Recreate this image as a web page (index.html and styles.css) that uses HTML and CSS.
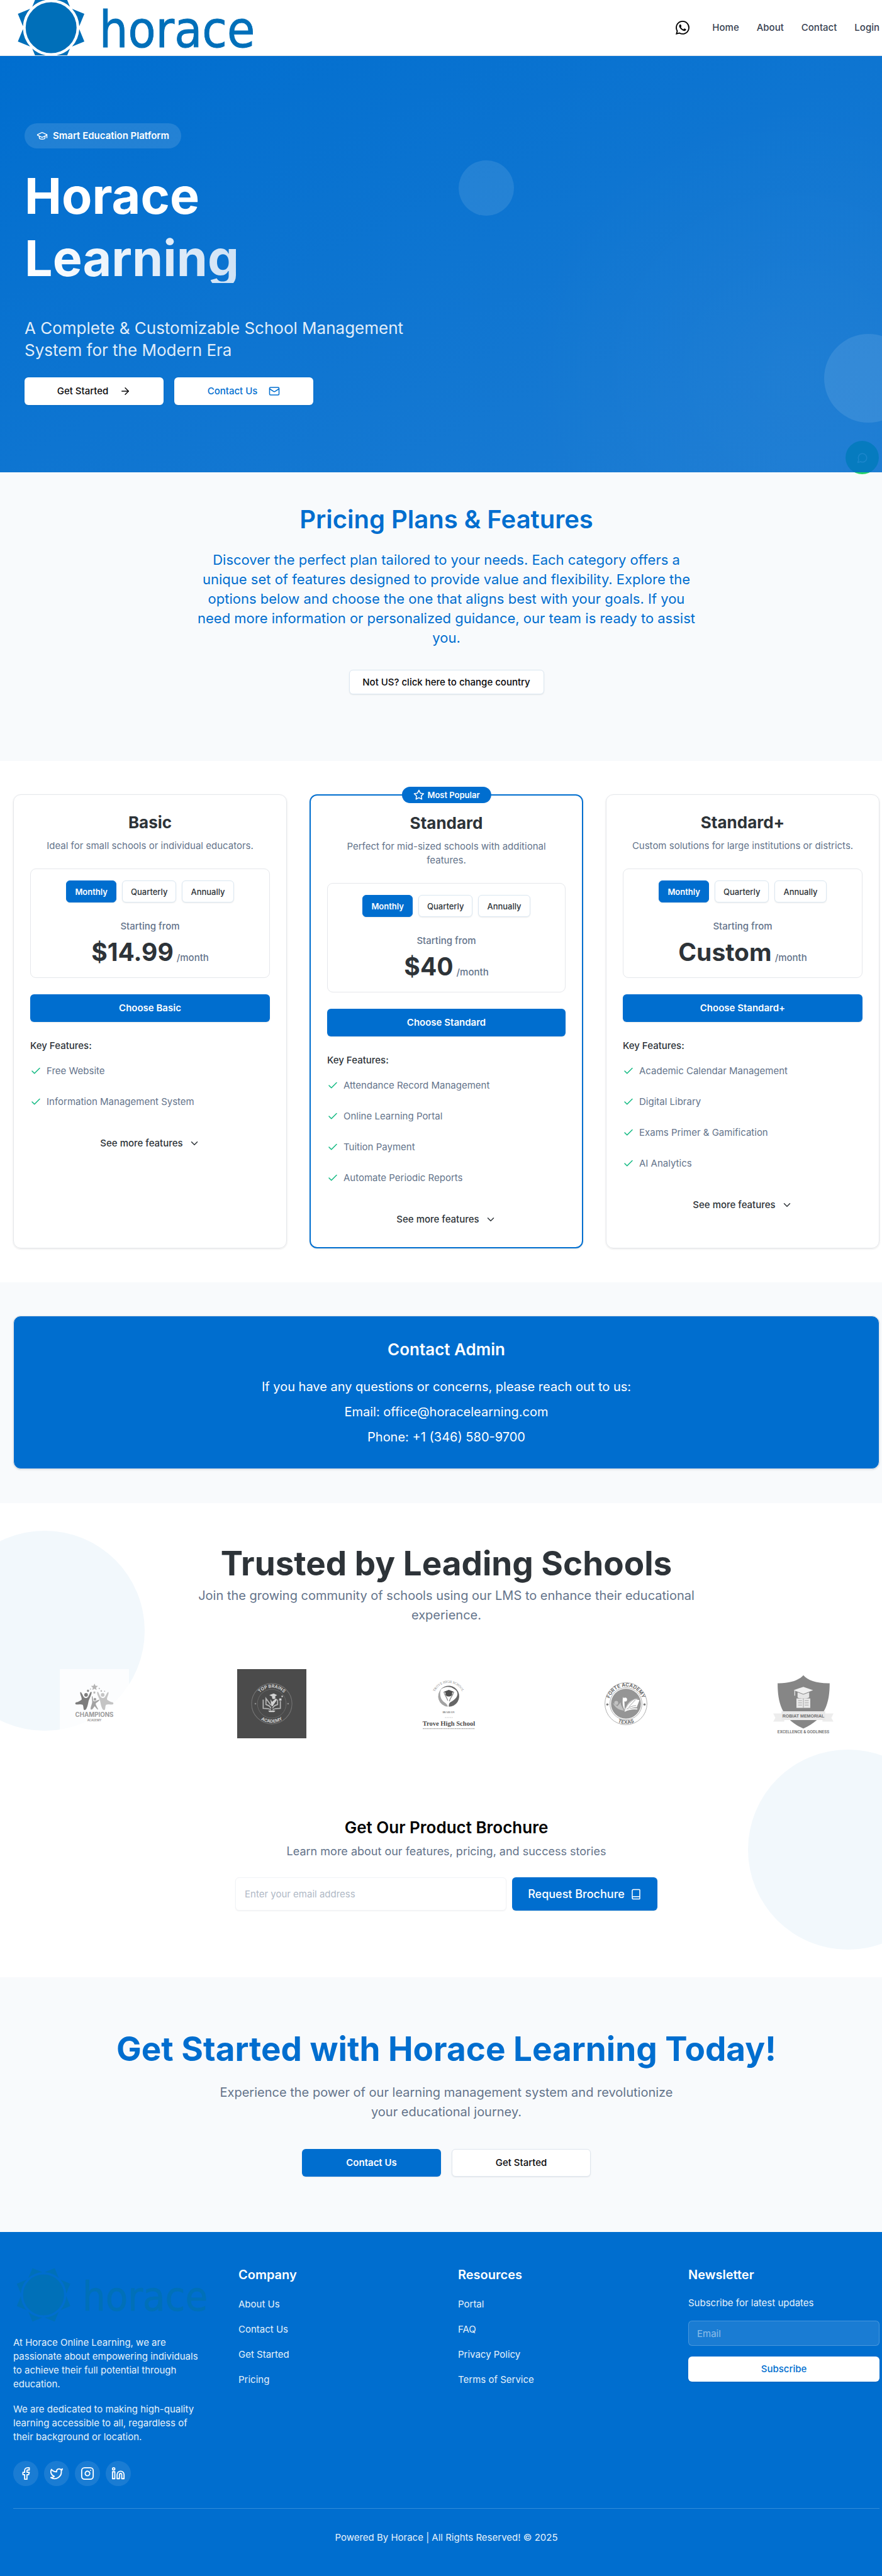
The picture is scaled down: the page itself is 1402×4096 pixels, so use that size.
FILE: index.html
```html
<!DOCTYPE html>
<html lang="en">
<head>
<meta charset="utf-8">
<meta name="viewport" content="width=device-width, initial-scale=1">
<title>Horace Learning</title>
<link rel="stylesheet" href="styles.css">
</head>
<body>

<svg class="sprite" aria-hidden="true">
  <symbol id="sun" viewBox="0 0 136 132">
    <g fill="currentColor" transform="translate(68 66)">
      <circle r="46"/>
      <path d="M65 0L48 17A51 51 0 0 0 48 -17Z" transform="rotate(22.5)"/>
      <path d="M65 0L48 17A51 51 0 0 0 48 -17Z" transform="rotate(67.5)"/>
      <path d="M65 0L48 17A51 51 0 0 0 48 -17Z" transform="rotate(112.5)"/>
      <path d="M65 0L48 17A51 51 0 0 0 48 -17Z" transform="rotate(157.5)"/>
      <path d="M65 0L48 17A51 51 0 0 0 48 -17Z" transform="rotate(202.5)"/>
      <path d="M65 0L48 17A51 51 0 0 0 48 -17Z" transform="rotate(247.5)"/>
      <path d="M65 0L48 17A51 51 0 0 0 48 -17Z" transform="rotate(292.5)"/>
      <path d="M65 0L48 17A51 51 0 0 0 48 -17Z" transform="rotate(337.5)"/>
    </g>
  </symbol>
  <symbol id="i-check" viewBox="0 0 24 24"><path d="M20 6 9 17l-5-5"/></symbol>
  <symbol id="i-chevron" viewBox="0 0 24 24"><path d="m6 9 6 6 6-6"/></symbol>
  <symbol id="i-star" viewBox="0 0 24 24"><path d="m12 2 3.09 6.26L22 9.27l-5 4.87 1.18 6.88L12 17.77l-6.18 3.25L7 14.14 2 9.27l6.91-1.01z"/></symbol>
</svg>

<header class="site-header">
  <div class="container header-row">
    <a class="brand-link" href="#" aria-label="Horace home"><svg class="brand brand-header" viewBox="0 16 440 100"><svg class="brand-crop" y="16" width="136" height="100" viewBox="0 16 136 100"><use href="#sun" width="136" height="132"/></svg><text class="brand-word" x="155" y="101">horace</text></svg></a>
    <nav class="nav">
      <a class="nav-wa" href="#" aria-label="WhatsApp">
        <svg width="22" height="22" viewBox="0 0 24 24" fill="currentColor"><path d="M17.472 14.382c-.297-.149-1.758-.867-2.03-.967-.273-.099-.471-.148-.67.15-.197.297-.767.966-.94 1.164-.173.199-.347.223-.644.075-.297-.15-1.255-.463-2.39-1.475-.883-.788-1.48-1.761-1.653-2.059-.173-.297-.018-.458.13-.606.134-.133.298-.347.446-.52.149-.174.198-.298.298-.497.099-.198.05-.371-.025-.52-.075-.149-.669-1.612-.916-2.207-.242-.579-.487-.5-.669-.51-.173-.008-.371-.01-.57-.01-.198 0-.52.074-.792.372-.272.297-1.04 1.016-1.04 2.479 0 1.462 1.065 2.875 1.213 3.074.149.198 2.096 3.2 5.077 4.487.709.306 1.262.489 1.694.625.712.227 1.36.195 1.871.118.571-.085 1.758-.719 2.006-1.413.248-.694.248-1.289.173-1.413-.074-.124-.272-.198-.57-.347m-5.421 7.403h-.004a9.87 9.87 0 0 1-5.031-1.378l-.361-.214-3.741.982.998-3.648-.235-.374a9.86 9.86 0 0 1-1.51-5.26c.001-5.45 4.436-9.884 9.888-9.884 2.64 0 5.122 1.03 6.988 2.898a9.825 9.825 0 0 1 2.893 6.994c-.003 5.45-4.437 9.884-9.885 9.884m8.413-18.297A11.815 11.815 0 0 0 12.05 0C5.495 0 .16 5.335.157 11.892c0 2.096.547 4.142 1.588 5.945L.057 24l6.305-1.654a11.882 11.882 0 0 0 5.683 1.448h.005c6.554 0 11.89-5.335 11.893-11.893a11.821 11.821 0 0 0-3.48-8.413Z"/></svg>
      </a>
      <a href="#">Home</a>
      <a href="#">About</a>
      <a href="#">Contact</a>
      <a href="#">Login</a>
    </nav>
  </div>
</header>

<main>
<section class="hero">
  <div class="hero-decor" aria-hidden="true"><span class="orb orb-small"></span><span class="orb orb-large"></span></div>
  <div class="hero-body">
    <p class="hero-tag">
      <svg class="icon" viewBox="0 0 24 24"><path d="M21.42 10.922a1 1 0 0 0-.019-1.838L12.83 5.18a2 2 0 0 0-1.66 0L2.6 9.08a1 1 0 0 0 0 1.832l8.57 3.908a2 2 0 0 0 1.66 0z"/><path d="M22 10v6"/><path d="M6 12.5V16a6 3 0 0 0 12 0v-3.5"/></svg>
      Smart Education Platform
    </p>
    <h1 class="hero-title"><span>Horace</span><span class="fade">Learning</span></h1>
    <p class="hero-sub">A Complete &amp; Customizable School Management System for the Modern Era</p>
    <div class="btn-row">
      <button class="btn btn-wide btn-white">Get Started
        <svg class="icon" viewBox="0 0 24 24"><path d="M5 12h14"/><path d="m12 5 7 7-7 7"/></svg></button>
      <button class="btn btn-wide btn-white btn-brand-text">Contact Us
        <svg class="icon" viewBox="0 0 24 24"><rect x="2" y="4" width="20" height="16" rx="2"/><path d="m22 7-8.97 5.7a1.94 1.94 0 0 1-2.06 0L2 7"/></svg></button>
    </div>
  </div>
  <button class="chat" aria-label="Chat"><svg class="icon" viewBox="0 0 24 24"><path d="M7.9 20A9 9 0 1 0 4 16.1L2 22Z"/></svg></button>
</section>

<section class="intro">
  <div class="container">
    <h2>Pricing Plans &amp; Features</h2>
    <p>Discover the perfect plan tailored to your needs. Each category offers a unique set of features designed to provide value and flexibility. Explore the options below and choose the one that aligns best with your goals. If you need more information or personalized guidance, our team is ready to assist you.</p>
    <button class="btn btn-country">Not US? click here to change country</button>
  </div>
</section>

<section class="plans">
  <div class="container plan-grid">
    <article class="plan">
      <h3>Basic</h3>
      <p class="plan-desc">Ideal for small schools or individual educators.</p>
      <div class="price-box">
        <div class="periods"><button class="period on">Monthly</button><button class="period">Quarterly</button><button class="period">Annually</button></div>
        <p class="from">Starting from</p>
        <p class="price"><strong>$14.99</strong><span>/month</span></p>
      </div>
      <button class="btn btn-primary">Choose Basic</button>
      <h4>Key Features:</h4>
      <ul>
        <li><svg class="icon"><use href="#i-check"/></svg>Free Website</li>
        <li><svg class="icon"><use href="#i-check"/></svg>Information Management System</li>
      </ul>
      <button class="more">See more features <svg class="icon"><use href="#i-chevron"/></svg></button>
    </article>

    <article class="plan plan-popular">
      <p class="popular"><svg class="icon"><use href="#i-star"/></svg>Most Popular</p>
      <h3>Standard</h3>
      <p class="plan-desc">Perfect for mid-sized schools with additional features.</p>
      <div class="price-box">
        <div class="periods"><button class="period on">Monthly</button><button class="period">Quarterly</button><button class="period">Annually</button></div>
        <p class="from">Starting from</p>
        <p class="price"><strong>$40</strong><span>/month</span></p>
      </div>
      <button class="btn btn-primary">Choose Standard</button>
      <h4>Key Features:</h4>
      <ul>
        <li><svg class="icon"><use href="#i-check"/></svg>Attendance Record Management</li>
        <li><svg class="icon"><use href="#i-check"/></svg>Online Learning Portal</li>
        <li><svg class="icon"><use href="#i-check"/></svg>Tuition Payment</li>
        <li><svg class="icon"><use href="#i-check"/></svg>Automate Periodic Reports</li>
      </ul>
      <button class="more">See more features <svg class="icon"><use href="#i-chevron"/></svg></button>
    </article>

    <article class="plan">
      <h3>Standard+</h3>
      <p class="plan-desc">Custom solutions for large institutions or districts.</p>
      <div class="price-box">
        <div class="periods"><button class="period on">Monthly</button><button class="period">Quarterly</button><button class="period">Annually</button></div>
        <p class="from">Starting from</p>
        <p class="price"><strong>Custom</strong><span>/month</span></p>
      </div>
      <button class="btn btn-primary">Choose Standard+</button>
      <h4>Key Features:</h4>
      <ul>
        <li><svg class="icon"><use href="#i-check"/></svg>Academic Calendar Management</li>
        <li><svg class="icon"><use href="#i-check"/></svg>Digital Library</li>
        <li><svg class="icon"><use href="#i-check"/></svg>Exams Primer &amp; Gamification</li>
        <li><svg class="icon"><use href="#i-check"/></svg>AI Analytics</li>
      </ul>
      <button class="more">See more features <svg class="icon"><use href="#i-chevron"/></svg></button>
    </article>
  </div>
</section>

<section class="admin">
  <div class="container">
    <div class="admin-card">
      <h2>Contact Admin</h2>
      <p>If you have any questions or concerns, please reach out to us:</p>
      <p>Email: office@horacelearning.com</p>
      <p>Phone: +1 (346) 580-9700</p>
    </div>
  </div>
</section>

<section class="trusted">
  <span class="bubble bubble-left"></span><span class="bubble bubble-right"></span>
  <div class="container">
    <h2>Trusted by Leading Schools</h2>
    <p class="lead">Join the growing community of schools using our LMS to enhance their educational experience.</p>
    <div class="schools">
      <svg class="school" viewBox="0 0 125 125" role="img" aria-label="Champions Academy">
        <rect width="125" height="125" fill="#fff" opacity=".75"/>
        <g fill="#b4b4b4">
          <path d="M62.700 26l1.700 4.200 4.600.3-3.500 2.900 1.100 4.500-3.900-2.500-3.900 2.500 1.100-4.500-3.500-2.900 4.600-.3z"/>
          <circle cx="71.400" cy="35" r="1.200"/><circle cx="75" cy="39.500" r="1.500"/><circle cx="81" cy="40" r="1"/>
          <circle cx="55.500" cy="36" r="1"/>
          <path d="M62.500 39.500l.8 1.700 1.800.2-1.300 1.300.3 1.900-1.600-.9-1.600.9.300-1.900-1.300-1.300 1.800-.2z"/>
        </g>
        <path d="M51 36.300l.8 1.700 1.800.2-1.300 1.300.3 1.900-1.600-.9-1.600.9.300-1.900-1.300-1.300 1.800-.2z" fill="#808080"/>
        <g fill="#7d7d7d"><circle cx="47.500" cy="46.500" r="3.300"/>
          <path d="M37 41.500c2.500-1 4 6 7 9.500 2 1.800 5 1.500 7-.5 2.500-3 3.500-9 5.500-9.500 2-.2 1 4-1 8.500-1.500 3.500-3.500 7-4 11-1 5-3 13.500-6.500 13.500-3 0-1.500-6-3.500-9.500-3-1.500-8-.5-11.500-.5-2.500-.5-2.500-3-.5-4 4-.8 8-3 10-5 1-4-3.500-9-2.500-13.500z"/></g>
        <g fill="#c4c4c4"><circle cx="77.500" cy="46.500" r="3.300"/>
          <path d="M88 41.500c-2.500-1-4 6-7 9.500-2 1.800-5 1.500-7-.5-2.500-3-3.500-9-5.500-9.500-2-.2-1 4 1 8.500 1.500 3.500 3.500 7 4 11 1 5 3 13.500 6.500 13.500 3 0 1.500-6 3.500-9.500 3-1.500 8-.5 11.500-.5 2.500-.5 2.500-3 .5-4-4-.8-8-3-10-5-1-4 3.500-9 2.500-13.500z"/></g>
        <g fill="#a3a3a3"><circle cx="63.500" cy="54.500" r="2.500"/>
          <path d="M58.500 48.500c1.500 0 1 6 2.500 9.500 3 1 7-2.500 11-3-1 3-5.500 5-7 7-.5 3 3 7 4.500 11-2 .5-4-3-6.500-6-2 2-3 6.500-7 6-1-3 2-9 2.500-13 .3-4-1.500-9 0-11.500z"/></g>
        <text x="62.500" y="86" font-size="11" fill="#9c9c9c" class="t-bold t-mid">CHAMPIONS</text>
        <text x="62.500" y="94" font-size="5" fill="#9c9c9c" class="t-bold t-mid">ACADEMY</text>
      </svg>
      <svg class="school" viewBox="0 0 125 125" role="img" aria-label="Top Brains Academy">
        <rect width="125" height="125" fill="#4b4b4b"/>
        <circle cx="62.500" cy="62.500" r="36.500" fill="none" stroke="#757575" stroke-width="1.200"/>
        <circle cx="62.500" cy="62.500" r="26" fill="none" stroke="#6c6c6c"/>
        <circle cx="33" cy="62.500" r="1.500" fill="#8d8d8d"/><circle cx="92" cy="62.500" r="1.500" fill="#8d8d8d"/>
        <path id="tb1" d="M33.500 62.500a29 29 0 0 1 58 0" fill="none"/>
        <path id="tb2" d="M28 62.500a34.500 34.500 0 0 0 69 0" fill="none"/>
        <g fill="#cfcfcf" font-size="8" class="t-bold t-mid">
          <text><textPath href="#tb1" startOffset="50%">TOP BRAINS</textPath></text>
          <text><textPath href="#tb2" startOffset="50%">ACADEMY</textPath></text>
        </g>
        <g fill="none" stroke="#b5b5b5" stroke-width="2"><path d="M61 74c-3-3-9-3-14-3V55M64 74c3-3 9-3 14-3V58M61 71c-1-4-5-6-9-7V53l9 12M64 71c1-4 5-6 9-7v-9"/></g>
        <g fill="#d2d2d2"><path d="M58 47l8-3 6 3-6 4z"/><circle cx="66" cy="51" r="3"/><path d="M60 54l3 5 7-6 2 2-8 12h-2zM56 75h13l-2 2.500h-9z"/><rect x="76" y="53" width="4" height="4"/><rect x="80" y="48" width="2.500" height="2.500"/></g>
      </svg>
      <svg class="school" viewBox="0 0 125 125" role="img" aria-label="Trove High School">
        <path id="tr1" d="M36 46.500a27 27 0 0 1 53 0" fill="none"/>
        <text font-size="6" fill="#7a7a7a" class="t-serif t-mid"><textPath href="#tr1" startOffset="50%">TROVE HIGH SCHOOL</textPath></text>
        <path d="M61 68A19 19 0 0 1 50 35a19 19 0 0 0 5 25c4 3 6 5 6 8z" fill="#a3a3a3"/>
        <path d="M48 37a19 19 0 1 1 15 31c0-3 0-7 4-9 12-6 16-17 6-23-8-6-18-5-25 1z" fill="#666"/>
        <path d="M54 41c2 8 6 10 7 16M72 41c-2 8-7 11-8 17" stroke="#8a8a8a" stroke-width="1.500" fill="none"/>
        <path d="M54 41l9-3.500 9 3.500-3 1.500v4c-3 4-9 4-12 0v-4z" fill="#4f4f4f"/>
        <text x="62.500" y="79" font-size="5.500" fill="#777" class="t-serif t-bold t-mid">IBADAN</text>
        <path d="M56 87.500h14" stroke="#c4c4c4" stroke-dasharray="2 1"/>
        <text x="63" y="102.500" font-size="12" fill="#4d4d4d" class="t-serif t-bold t-mid">Trove High School</text>
        <path d="M16 107.500h94" stroke="#aaa" stroke-width="1.500" stroke-dasharray="3 .7 2 .7"/>
      </svg>
      <svg class="school" viewBox="0 0 125 125" role="img" aria-label="Forte Academy Texas">
        <circle cx="62.500" cy="62.500" r="38" fill="#fff" stroke="#8c8c8c" stroke-width=".8"/>
        <circle cx="62.500" cy="62.500" r="29" fill="none" stroke="#8c8c8c" stroke-width=".8"/>
        <circle cx="62.500" cy="62.500" r="27" fill="#959595"/>
        <circle cx="29" cy="64" r="2" fill="#7a7a7a"/><circle cx="96" cy="64" r="2" fill="#7a7a7a"/>
        <path id="fa1" d="M31.500 62.500a31 31 0 0 1 62 0" fill="none"/>
        <path id="fa2" d="M26 62.500a36.500 36.500 0 0 0 73 0" fill="none"/>
        <g fill="#707070" font-size="9" class="t-bold t-mid">
          <text><textPath href="#fa1" startOffset="50%">FORTE ACADEMY</textPath></text>
          <text><textPath href="#fa2" startOffset="50%">TEXAS</textPath></text>
        </g>
        <path d="M57 50c3 5 3 10 3 24-4-8-4-14-3-24z" fill="#fff"/><circle cx="61" cy="55" r="3.500" fill="#fff"/>
        <path d="M61 72c3-6 8-12 18-18l8 2-5 13c-9 0-16 3-21 6z" fill="#fff"/>
        <path d="M68 68l12-13M64 72c5-4 12-6 17-6" stroke="#959595" fill="none"/>
        <path d="M62 73c1-12 12-20 25-21-12 3-20 9-25 21z" fill="#ccc"/>
        <path d="M39 61l8 6 6-7c0 6 3 9 6 15-9-1-17-6-20-14z" fill="#c2c2c2"/><circle cx="45" cy="61" r="3.500" fill="#c2c2c2"/>
        <path d="M60 76c8-4 16-5 23-4" stroke="#fff" stroke-width="2" fill="none"/>
      </svg>
      <svg class="school" viewBox="0 0 125 125" role="img" aria-label="Robiat Memorial">
        <path d="M62.500 11c8 9 24 15 47.500 14.500 0 36-8 64-47.500 82C24 90 16 62 16 25.500 39 26 54.500 20 62.500 11z" fill="#868686"/>
        <path d="M45 38l17.500-6L80 38l-17.500 7z" fill="#f0f0f0"/><path d="M52 42v9c5 3 16 3 21 0v-9l-10.500 4z" fill="#e6e6e6"/><path d="M47 39v9" stroke="#e6e6e6" stroke-width="1.500"/>
        <rect x="50" y="53" width="25" height="17" fill="#e9e9e9"/><path d="M62.500 53v17M53 57h7M53 61h7M53 65h7M65 57h7M65 61h7M65 65h7" stroke="#999" fill="none"/>
        <path d="M8 80h20v15H8l4-7zM117 80H97v15h20l-4-7z" fill="#ededed"/>
        <path d="M23 76h79v16H23z" fill="#e9e9e9"/>
        <text x="62.500" y="87" font-size="8" fill="#6f6f6f" class="t-narrow t-bold t-mid">ROBIAT MEMORIAL</text>
        <text x="62.500" y="116" font-size="7" fill="#777" class="t-bold t-mid">EXCELLENCE &amp; GODLINESS</text>
      </svg>
    </div>
    <div class="brochure">
      <h3>Get Our Product Brochure</h3>
      <p id="brochure-note">Learn more about our features, pricing, and success stories</p>
      <form class="brochure-form">
        <input type="email" placeholder="Enter your email address" aria-label="Email address" aria-describedby="brochure-note">
        <button type="button">Request Brochure
          <svg class="icon" viewBox="0 0 24 24"><path d="M4 19.500v-15A2.500 2.500 0 0 1 6.500 2H19a1 1 0 0 1 1 1v18a1 1 0 0 1-1 1H6.500a1 1 0 0 1 0-5H20"/></svg></button>
      </form>
    </div>
  </div>
</section>

<section class="cta">
  <div class="container">
    <h2>Get Started with Horace Learning Today!</h2>
    <p>Experience the power of our learning management system and revolutionize your educational journey.</p>
    <div class="btn-row">
      <button class="btn btn-wide btn-primary">Contact Us</button>
      <button class="btn btn-wide btn-outline">Get Started</button>
    </div>
  </div>
</section>
</main>

<footer class="footer">
  <div class="container">
    <div class="footer-grid">
      <div class="about">
        <svg class="brand brand-footer" viewBox="0 0 440 132"><use href="#sun" width="136" height="132"/><text class="brand-word" x="155" y="101">horace</text></svg>
        <p>At Horace Online Learning, we are passionate about empowering individuals to achieve their full potential through education.</p>
        <p>We are dedicated to making high-quality learning accessible to all, regardless of their background or location.</p>
        <div class="social">
          <a href="#" aria-label="Facebook"><svg class="icon" viewBox="0 0 24 24"><path d="M18 2h-3a5 5 0 0 0-5 5v3H7v4h3v8h4v-8h3l1-4h-4V7a1 1 0 0 1 1-1h3z"/></svg></a>
          <a href="#" aria-label="Twitter"><svg class="icon" viewBox="0 0 24 24"><path d="M22 4s-.7 2.100-2 3.400c1.600 10-9.400 17.300-18 11.600 2.200.1 4.400-.6 6-2C3 15.500.5 9.600 3 5c2.200 2.600 5.600 4.100 9 4-.9-4.200 4-6.600 7-3.800 1.100 0 3-1.200 3-1.200z"/></svg></a>
          <a href="#" aria-label="Instagram"><svg class="icon" viewBox="0 0 24 24"><rect x="2" y="2" width="20" height="20" rx="5"/><path d="M16 11.370A4 4 0 1 1 12.630 8 4 4 0 0 1 16 11.370z"/><path d="M17.500 6.500h.01"/></svg></a>
          <a href="#" aria-label="LinkedIn"><svg class="icon" viewBox="0 0 24 24"><path d="M16 8a6 6 0 0 1 6 6v7h-4v-7a2 2 0 0 0-4 0v7h-4v-7a6 6 0 0 1 6-6z"/><rect x="2" y="9" width="4" height="12"/><circle cx="4" cy="4" r="2"/></svg></a>
        </div>
      </div>
      <nav class="links" aria-label="Company">
        <h3>Company</h3>
        <a href="#">About Us</a><a href="#">Contact Us</a><a href="#">Get Started</a><a href="#">Pricing</a>
      </nav>
      <nav class="links" aria-label="Resources">
        <h3>Resources</h3>
        <a href="#">Portal</a><a href="#">FAQ</a><a href="#">Privacy Policy</a><a href="#">Terms of Service</a>
      </nav>
      <form class="newsletter">
        <h3>Newsletter</h3>
        <label for="news-email">Subscribe for latest updates</label>
        <input id="news-email" type="email" placeholder="Email">
        <button type="button">Subscribe</button>
      </form>
    </div>
    <p class="legal">Powered By Horace | All Rights Reserved! © 2025</p>
  </div>
</footer>
</body>
</html>
```
FILE: styles.css
```css
:root {
  --brand: #006ecf;
  --ink: #2d3338;
  --muted: #64748b;
  --soft: #f8fafc;
  --line: #e5e7eb;
  --shadow: 0 1px 2px rgba(0, 0, 0, .08);
}

* { box-sizing: border-box; }

body {
  margin: 0;
  font: 15px/22px Inter, "Liberation Sans", sans-serif;
  color: #09090b;
  background: #fff;
  overflow-x: hidden;
}

h1, h2, h3, h4, p, ul { margin: 0; padding: 0; }
ul { list-style: none; }
a { color: inherit; text-decoration: none; }
button, input { font: inherit; color: inherit; }
button { cursor: pointer; border: 0; padding: 0; }

.container { padding: 0 4px 0 21px; }
.sprite { position: absolute; width: 0; height: 0; }

.icon {
  width: 18px;
  height: 18px;
  flex: none;
  fill: none;
  stroke: currentColor;
  stroke-width: 2;
  stroke-linecap: round;
  stroke-linejoin: round;
}

/* Brand */
.brand { display: block; flex: none; overflow: visible; }
.brand-crop { overflow: hidden; }
.brand-word {
  font-family: "DejaVu Sans Condensed", "DejaVu Sans", sans-serif;
  font-size: 91px;
  fill: currentColor;
  stroke: currentColor;
  stroke-width: 1;
}
.brand-header { width: 388px; height: 88px; color: #006fb9; }
.brand-footer { width: 312px; height: 94px; color: #0070b8; }

/* Header */
.site-header { height: 89px; border-bottom: 1px solid var(--line); }
.header-row { display: flex; align-items: center; justify-content: space-between; height: 100%; }
.nav { display: flex; align-items: center; gap: 28px; font-weight: 500; color: #374151; }
.nav-wa { display: flex; margin-right: 8px; color: #000; }

/* Buttons */
.btn {
  display: flex;
  align-items: center;
  justify-content: center;
  gap: 18px;
  height: 44px;
  border-radius: 6px;
  font-weight: 500;
  box-shadow: var(--shadow);
}
.btn-row { display: flex; gap: 17px; }
.btn-wide { width: 221px; }
.btn-white { background: #fff; }
.btn-brand-text { color: var(--brand); }
.btn-primary { background: var(--brand); color: #fff; font-weight: 600; }
.btn-outline { background: #fff; border: 1px solid #dfe6ee; }
.btn-country { height: 39px; width: 310px; margin: 35px auto 0; background: #fff; border: 1px solid #dbe7f1; }

/* Hero */
.hero {
  position: relative;
  padding: 107px 39px;
  color: #fff;
  background:
    radial-gradient(circle at 90% 76%, rgba(255, 255, 255, .03), transparent 32%),
    linear-gradient(to bottom right, #006ecf, #1c7cd3);
}
.hero-decor { position: absolute; inset: 0; overflow: hidden; }
.orb { position: absolute; border-radius: 50%; background: rgba(255, 255, 255, .1); }
.orb-small { width: 88px; height: 88px; left: 52%; top: 25%; }
.orb-large { width: 141px; height: 141px; right: -49px; bottom: 79px; }
.hero-body { position: relative; display: flex; flex-direction: column; align-items: flex-start; color: #fff; }
.hero-tag {
  display: flex;
  align-items: center;
  gap: 8px;
  height: 40px;
  padding: 0 19px;
  border-radius: 20px;
  font-weight: 600;
  background: rgba(255, 255, 255, .12);
}
.hero-title { display: flex; flex-direction: column; gap: 19px; margin-top: 35px; font-size: 79px; line-height: 80px; font-weight: 700; }
.fade { background: linear-gradient(90deg, #fff, #cfe2f5); background-clip: text; -webkit-background-clip: text; color: transparent; }
.hero-sub { max-width: 660px; margin: 54px 0 26px; font-size: 26px; line-height: 35px; color: rgba(255, 255, 255, .9); }
.hero .btn { color: #09090b; }
.hero .btn-brand-text { color: var(--brand); }
.chat {
  position: absolute;
  right: 5px;
  bottom: -3px;
  display: flex;
  align-items: center;
  justify-content: center;
  width: 53px;
  height: 53px;
  border-radius: 50%;
  color: #1c86cc;
  background: linear-gradient(#067bbf 50px, #25d366 50px);
}

/* Pricing intro */
.intro { padding: 53px 0 106px; background: var(--soft); text-align: center; color: var(--brand); }
.intro h2 { font-size: 40px; line-height: 44px; font-weight: 600; }
.intro p { max-width: 812px; margin: 27px auto 0; font-size: 22px; line-height: 31px; }
.intro .btn { color: #09090b; }

/* Plans */
.plans { padding: 53px 0 54px; }
.plan-grid { display: grid; grid-template-columns: repeat(3, 1fr); gap: 36px; }
.plan {
  position: relative;
  display: flex;
  flex-direction: column;
  padding: 26px 26px 24px;
  border: 1px solid var(--line);
  border-radius: 12px;
  box-shadow: 0 1px 3px rgba(0, 0, 0, .1);
  color: var(--ink);
}
.plan-popular { border: 2px solid var(--brand); }
.popular {
  position: absolute;
  top: -14px;
  left: 50%;
  transform: translateX(-50%);
  display: flex;
  align-items: center;
  gap: 5px;
  height: 26px;
  padding: 0 18px;
  border-radius: 13px;
  font-size: 13px;
  font-weight: 600;
  white-space: nowrap;
  color: #fff;
  background: var(--brand);
}
.plan h3 { font-size: 26px; line-height: 35px; font-weight: 700; text-align: center; }
.plan-desc { margin-top: 9px; text-align: center; color: var(--muted); }
.price-box { margin: 25px 0 26px; padding: 18px; border: 1px solid var(--line); border-radius: 9px; text-align: center; }
.periods { display: flex; justify-content: center; gap: 9px; }
.period {
  height: 35px;
  padding: 0 13px;
  border: 1px solid #dbe7f1;
  border-radius: 6px;
  font-size: 13px;
  font-weight: 500;
  background: #fff;
  box-shadow: var(--shadow);
}
.period.on { border-color: var(--brand); font-weight: 600; color: #fff; background: var(--brand); }
.from { margin: 27px 0 8px; font-weight: 500; color: var(--muted); }
.price { display: flex; justify-content: center; align-items: baseline; gap: 5px; font-weight: 500; color: var(--muted); }
.price strong { font-size: 39px; line-height: 44px; font-weight: 700; color: var(--ink); }
.plan h4 { margin: 27px 0 18px; font-size: 15px; font-weight: 500; }
.plan ul { display: flex; flex-direction: column; gap: 27px; color: var(--muted); }
.plan li { display: flex; align-items: center; gap: 8px; }
.plan li .icon { color: #10b981; }
.more {
  display: flex;
  align-items: center;
  justify-content: center;
  gap: 9px;
  height: 40px;
  margin-top: 35px;
  font-weight: 500;
  background: none;
}

/* Contact admin */
.admin { padding: 53px 0 54px; background: var(--soft); }
.admin-card {
  display: flex;
  flex-direction: column;
  gap: 9px;
  padding: 35px 26px 34px;
  border: 1px solid var(--line);
  border-radius: 12px;
  box-shadow: 0 1px 3px rgba(0, 0, 0, .12);
  text-align: center;
  font-size: 20px;
  line-height: 31px;
  color: #fff;
  background: var(--brand);
}
.admin-card h2 { margin-bottom: 18px; font-size: 26px; line-height: 35px; font-weight: 600; }

/* Trusted by */
.trusted { position: relative; overflow: hidden; padding: 70px 0 106px; text-align: center; }
.trusted .container { position: relative; }
.bubble { position: absolute; width: 318px; height: 318px; border-radius: 50%; background: #f2f8fc; }
.bubble-left { left: -88px; top: 44px; }
.bubble-right { right: -105px; bottom: 44px; }
.trusted h2 { font-size: 53px; line-height: 53px; font-weight: 700; color: var(--ink); }
.lead { max-width: 848px; margin: 9px auto 70px; font-size: 20px; line-height: 31px; color: var(--muted); }
.schools { display: grid; grid-template-columns: repeat(5, 1fr); gap: 39px; padding-left: 8px; justify-items: center; }
.school { display: block; width: 110px; height: 110px; }
.t-mid { text-anchor: middle; }
.t-bold { font-weight: 700; }
.t-serif { font-family: "Liberation Serif", serif; }
.t-narrow { font-family: "Liberation Sans Narrow", "Liberation Sans", sans-serif; }

.brochure { margin-top: 124px; }
.brochure h3 { font-size: 26px; line-height: 35px; font-weight: 600; color: #000; }
.brochure p { margin: 8px 0 28px; font-size: 18px; line-height: 26px; color: var(--muted); }
.brochure-form { display: flex; gap: 9px; max-width: 671px; margin: 0 auto; }
.brochure-form input {
  flex: 1;
  min-width: 0;
  height: 53px;
  padding: 0 14px;
  border: 1px solid #f1f3f6;
  border-radius: 6px;
  background: #fff;
  box-shadow: 0 1px 2px rgba(0, 0, 0, .05);
}
.brochure-form input::placeholder { color: #b0b9c6; }
.brochure-form button {
  display: flex;
  align-items: center;
  justify-content: center;
  gap: 9px;
  width: 231px;
  border-radius: 6px;
  font-size: 18px;
  font-weight: 500;
  color: #fff;
  background: var(--brand);
  box-shadow: var(--shadow);
}

/* Call to action */
.cta { padding: 88px 0; background: var(--soft); text-align: center; }
.cta h2 { font-size: 53px; line-height: 53px; font-weight: 700; color: var(--brand); }
.cta p { max-width: 742px; margin: 27px auto 43px; font-size: 20px; line-height: 31px; color: var(--muted); }
.cta .btn-row { justify-content: center; }

/* Footer */
.footer { padding: 53px 0 51px; color: #e6f1fa; background: var(--brand); }
.footer-grid { display: grid; grid-template-columns: 358fr 349fr 366fr 304fr; }
.footer h3 { font-size: 20px; line-height: 31px; font-weight: 600; color: #fff; }
.about p { max-width: 300px; margin-top: 18px; }
.social { display: flex; gap: 9px; margin-top: 27px; color: #fff; }
.social a { display: flex; align-items: center; justify-content: center; width: 40px; height: 40px; border-radius: 50%; background: rgba(255, 255, 255, .1); }
.social .icon { width: 22px; height: 22px; }
.links { display: flex; flex-direction: column; align-items: flex-start; gap: 18px; }
.links h3 { margin-bottom: 2px; }
.newsletter { display: flex; flex-direction: column; }
.newsletter label { margin: 18px 0 17px; }
.newsletter input {
  height: 40px;
  min-width: 0;
  padding: 0 13px;
  border: 1px solid rgba(255, 255, 255, .2);
  border-radius: 6px;
  background: rgba(255, 255, 255, .1);
}
.newsletter input::placeholder { color: rgba(255, 255, 255, .5); }
.newsletter button { height: 40px; margin-top: 17px; border-radius: 6px; font-weight: 500; color: var(--brand); background: #fff; box-shadow: var(--shadow); }
.legal { margin-top: 35px; padding-top: 35px; border-top: 1px solid rgba(255, 255, 255, .2); text-align: center; }
```
